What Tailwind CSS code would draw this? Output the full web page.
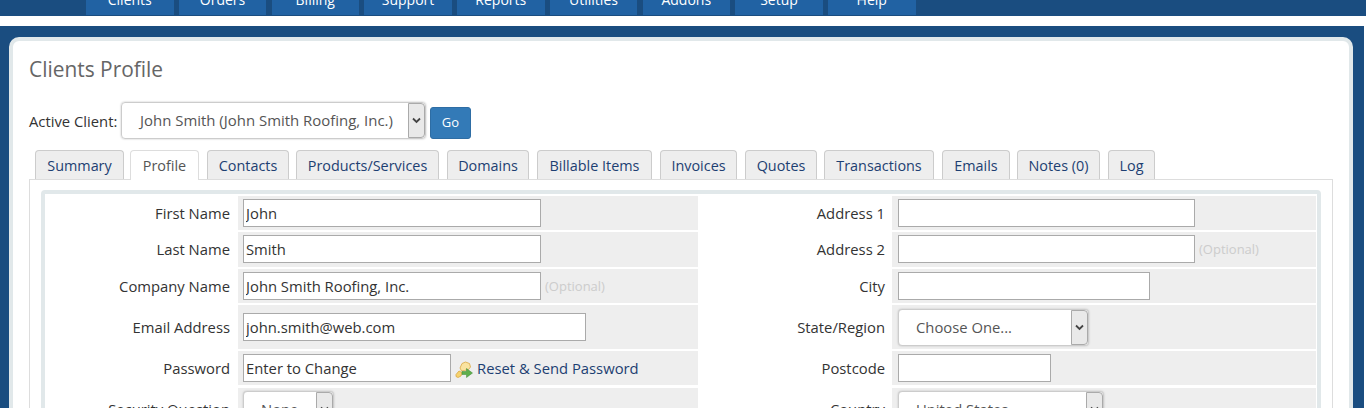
<!DOCTYPE html>
<html lang="en">
<head>
    <meta charset="UTF-8">
    <title>Clients Profile</title>
    <script src="https://cdn.jsdelivr.net/npm/@tailwindcss/browser@4"></script>
</head>
<body class="bg-white h-[408px] overflow-hidden font-['Open_Sans',sans-serif] text-[14.8px] text-[#333]">
    <!-- Top nav (cut off by the window) -->
    <nav class="h-4 bg-[#1a4d80] flex pl-[86px] gap-[5.25px] overflow-hidden text-white text-center text-[14px] leading-[0px]">
        <a class="w-[87.5px] h-[15px] bg-[#2162a3] block">Clients</a>
        <a class="w-[87.5px] h-[15px] bg-[#2162a3] block">Orders</a>
        <a class="w-[87.5px] h-[15px] bg-[#2162a3] block">Billing</a>
        <a class="w-[87.5px] h-[15px] bg-[#2162a3] block">Support</a>
        <a class="w-[87.5px] h-[15px] bg-[#2162a3] block">Reports</a>
        <a class="w-[87.5px] h-[15px] bg-[#2162a3] block">Utilities</a>
        <a class="w-[87.5px] h-[15px] bg-[#2162a3] block">Addons</a>
        <a class="w-[87.5px] h-[15px] bg-[#2162a3] block">Setup</a>
        <a class="w-[87.5px] h-[15px] bg-[#2162a3] block">Help</a>
    </nav>
    <div class="h-[10px]"></div>

    <!-- Page content -->
    <div class="bg-[#1a4d80] pt-[11px] pl-[9px] pr-[11px] mr-[2px] h-[382px] overflow-hidden">
        <div class="bg-white border-[4px] border-[#e1e8ea] rounded-t-[10px] h-[400px] pt-[14px] px-4">
            <h1 class="text-[20.9px] leading-[28px] text-[#666]">Clients Profile</h1>
            <div class="flex items-start mt-[19px]">
                <span class="w-[92px] mt-[8px] whitespace-nowrap">Active Client:</span>
                <div class="w-[305px] h-[37px] border border-[#ccc] rounded-[4px] flex items-center pl-[18px] text-[14.95px] text-[#555] shadow-[0_0_2px_#bbb] relative">
                    John Smith (John Smith Roofing, Inc.)
                    <span class="absolute right-0 inset-y-0 w-[17px] bg-[#e9e9e9] border border-[#aaa] rounded-r-[4px] flex items-center justify-center">
                        <svg width="9" height="7" viewBox="0 0 9 7"><path d="M1 1.5l3.5 3.5 3.5-3.5" fill="none" stroke="#444" stroke-width="1.8"/></svg>
                    </span>
                </div>
                <button class="ml-[4px] mt-[5px] w-[41px] h-[32px] bg-[#337ab7] border border-[#2e6da4] rounded-[3px] text-white text-[13px]">Go</button>
            </div>

            <!-- Tabs -->
            <div class="flex gap-[7px] mt-[11px] pl-[6px] h-[29px] text-[14.4px] leading-[30px] text-center text-[#1d3f72] relative z-10">
                <a class="w-[89px] h-[29px] bg-[#eee] border border-b-0 border-[#ccc] rounded-t-[4px]">Summary</a>
                <a class="w-[69px] h-[30px] -ml-[1px] bg-white border border-b-0 border-[#ddd] rounded-t-[4px] text-[#555]">Profile</a>
                <a class="w-[82px] h-[29px] ml-[1px] bg-[#eee] border border-b-0 border-[#ccc] rounded-t-[4px]">Contacts</a>
                <a class="w-[143px] h-[29px] bg-[#eee] border border-b-0 border-[#ccc] rounded-t-[4px]">Products/Services</a>
                <a class="w-[82px] h-[29px] ml-[1px] bg-[#eee] border border-b-0 border-[#ccc] rounded-t-[4px]">Domains</a>
                <a class="w-[115px] h-[29px] ml-[1px] bg-[#eee] border border-b-0 border-[#ccc] rounded-t-[4px]">Billable Items</a>
                <a class="w-[77px] h-[29px] ml-[1px] bg-[#eee] border border-b-0 border-[#ccc] rounded-t-[4px]">Invoices</a>
                <a class="w-[72px] h-[29px] ml-[1px] bg-[#eee] border border-b-0 border-[#ccc] rounded-t-[4px]">Quotes</a>
                <a class="w-[110px] h-[29px] bg-[#eee] border border-b-0 border-[#ccc] rounded-t-[4px]">Transactions</a>
                <a class="w-[68px] h-[29px] ml-[1px] bg-[#eee] border border-b-0 border-[#ccc] rounded-t-[4px]">Emails</a>
                <a class="w-[83px] h-[29px] bg-[#eee] border border-b-0 border-[#ccc] rounded-t-[4px]">Notes (0)</a>
                <a class="w-[47px] h-[29px] ml-[1px] bg-[#eee] border border-b-0 border-[#ccc] rounded-t-[4px]">Log</a>
            </div>

            <!-- Profile form -->
            <div class="border border-[#ddd] h-[300px] px-[11px] pt-[10px]">
                <div class="border-[4px] border-[#e1e8ea] rounded-[4px] h-[300px] pt-[2px] grid grid-cols-[193px_460px_194px_424px] gap-y-[2px] content-start">
                    <label class="h-[34px] flex items-center justify-end pr-2">First Name</label>
                    <div class="h-[34px] bg-[#eee] flex items-center pl-[5px]"><input value="John" class="w-[298px] h-[28px] bg-white border border-[#aaa] px-[2px]"></div>
                    <label class="h-[34px] flex items-center justify-end pr-[7px]">Address 1</label>
                    <div class="h-[34px] bg-[#eee] flex items-center pl-[6px]"><input class="w-[297px] h-[28px] bg-white border border-[#aaa] px-[2px]"></div>

                    <label class="h-[35px] flex items-center justify-end pr-2">Last Name</label>
                    <div class="h-[35px] bg-[#eee] flex items-center pl-[5px] pb-[1px]"><input value="Smith" class="w-[298px] h-[28px] bg-white border border-[#aaa] px-[2px]"></div>
                    <label class="h-[35px] flex items-center justify-end pr-[7px]">Address 2</label>
                    <div class="h-[35px] bg-[#eee] flex items-center pl-[6px] pb-[1px]"><input class="w-[297px] h-[28px] bg-white border border-[#aaa] px-[2px]"><span class="ml-1 mt-[2px] text-[13px] text-[#ccc]">(Optional)</span></div>

                    <label class="h-[34px] flex items-center justify-end pr-2">Company Name</label>
                    <div class="h-[34px] bg-[#eee] flex items-center pl-[5px]"><input value="John Smith Roofing, Inc." class="w-[298px] h-[28px] bg-white border border-[#aaa] px-[2px]"><span class="ml-1 mt-[2px] text-[13px] text-[#ccc]">(Optional)</span></div>
                    <label class="h-[34px] flex items-center justify-end pr-[7px]">City</label>
                    <div class="h-[34px] bg-[#eee] flex items-center pl-[6px]"><input class="w-[252px] h-[28px] bg-white border border-[#aaa] px-[2px]"></div>

                    <label class="h-[44px] flex items-center justify-end pr-2">Email Address</label>
                    <div class="h-[44px] bg-[#eee] flex items-center pl-[5px]"><input value="john.smith@web.com" class="w-[343px] h-[28px] bg-white border border-[#aaa] px-[2px]"></div>
                    <label class="h-[44px] flex items-center justify-end pr-[7px]">State/Region</label>
                    <div class="h-[44px] bg-[#eee] flex items-center pl-[6px]">
                        <div class="w-[191px] h-[37px] bg-white border border-[#ccc] rounded-[4px] flex items-center pl-[17px] text-[#555] shadow-[0_0_2px_#bbb] relative">
                            Choose One...
                            <span class="absolute right-0 inset-y-0 w-[17px] bg-[#e9e9e9] border border-[#aaa] rounded-r-[4px] flex items-center justify-center">
                                <svg width="9" height="7" viewBox="0 0 9 7"><path d="M1 1.5l3.5 3.5 3.5-3.5" fill="none" stroke="#444" stroke-width="1.8"/></svg>
                            </span>
                        </div>
                    </div>

                    <label class="h-[34px] flex items-center justify-end pr-2">Password</label>
                    <div class="h-[34px] bg-[#eee] flex items-center pl-[5px]">
                        <input value="Enter to Change" class="w-[208px] h-[28px] bg-white border border-[#aaa] px-[2px]">
                        <svg class="ml-[4px] mr-[4px] mt-[3px]" width="18" height="18" viewBox="0 0 18 18">
                            <path d="M1 13.5l3-3.5 3 1.5-1 3.5-3 1.5-2-1z" fill="#f6d36f" stroke="#d9a741" stroke-width=".8"/>
                            <path d="M5 7l2-4.5 3.5-1.5 4 1.5 1 3.5-2 2.5-4 1-3 .5z" fill="#f9e3a0" stroke="#d9a741" stroke-width=".8"/>
                            <path d="M7 10.5h4.5V7.5l6 4.5-6 4.5v-3H7z" fill="#5fae4c" stroke="#3f8a35" stroke-width=".5"/>
                        </svg>
                        <a class="text-[#1d3f72]">Reset &amp; Send Password</a>
                    </div>
                    <label class="h-[34px] flex items-center justify-end pr-[7px]">Postcode</label>
                    <div class="h-[34px] bg-[#eee] flex items-center pl-[6px]"><input class="w-[153px] h-[28px] bg-white border border-[#aaa] px-[2px]"></div>

                    <label class="h-[42px] mt-[1px] flex items-center justify-end pr-2 whitespace-nowrap">Security Question</label>
                    <div class="h-[42px] mt-[1px] bg-[#eee] flex items-start pt-[3px] pl-[5px]">
                        <div class="w-[91px] h-[37px] bg-white border border-[#ccc] rounded-[4px] flex items-center pl-[17px] text-[#555] shadow-[0_0_2px_#bbb] relative">
                            None
                            <span class="absolute right-0 inset-y-0 w-[17px] bg-[#e9e9e9] border border-[#aaa] rounded-r-[4px] flex items-center justify-center">
                                <svg width="9" height="7" viewBox="0 0 9 7"><path d="M1 1.5l3.5 3.5 3.5-3.5" fill="none" stroke="#444" stroke-width="1.8"/></svg>
                            </span>
                        </div>
                    </div>
                    <label class="h-[42px] mt-[1px] flex items-center justify-end pr-[7px]">Country</label>
                    <div class="h-[42px] mt-[1px] bg-[#eee] flex items-start pt-[3px] pl-[6px]">
                        <div class="w-[206px] h-[37px] bg-white border border-[#ccc] rounded-[4px] flex items-center pl-[17px] text-[#555] shadow-[0_0_2px_#bbb] relative">
                            United States
                            <span class="absolute right-0 inset-y-0 w-[17px] bg-[#e9e9e9] border border-[#aaa] rounded-r-[4px] flex items-center justify-center">
                                <svg width="9" height="7" viewBox="0 0 9 7"><path d="M1 1.5l3.5 3.5 3.5-3.5" fill="none" stroke="#444" stroke-width="1.8"/></svg>
                            </span>
                        </div>
                    </div>
                </div>
            </div>
        </div>
    </div>
</body>
</html>
